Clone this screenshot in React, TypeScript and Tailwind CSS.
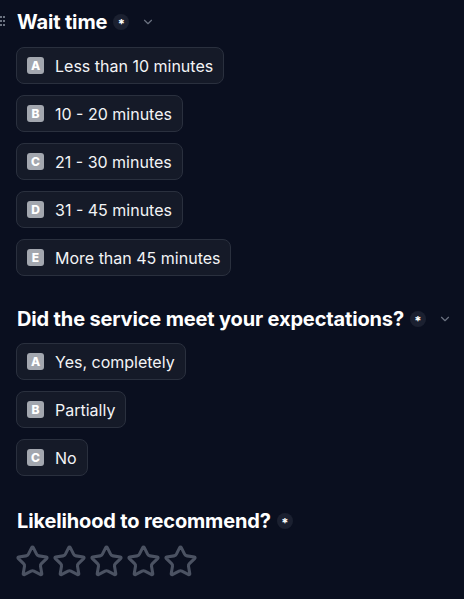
import { Star, ChevronDown } from "lucide-react";

interface Question {
  title:   string;
  options: string[];
}

const QUESTIONS: Question[] = [
  {
    title: "Wait time",
    options: ["Less than 10 minutes", "10 - 20 minutes", "21 - 30 minutes", "31 - 45 minutes", "More than 45 minutes"],
  },
  {
    title: "Did the service meet your expectations?",
    options: ["Yes, completely", "Partially", "No"],
  },
];

const LETTERS = ["A", "B", "C", "D", "E"];

function Required() {
  return (
    <span className="w-4 h-4 shrink-0 rounded-full bg-[#1b2030] flex items-center justify-center text-white text-[13px] font-bold leading-none pt-[4px]">
      *
    </span>
  );
}

function Heading({ title, chevron = true, grip = false }: { title: string; chevron?: boolean; grip?: boolean }) {
  return (
    <div className="relative flex items-center h-7 whitespace-nowrap">
      {grip && (
        <svg className="absolute -left-[17px] top-[7px]" width="6" height="12" viewBox="0 0 6 12">
          {[0, 4, 8].map((y) => (
            <g key={y} fill="#6b7280">
              <rect x="0" y={y + 1} width="2" height="2" />
              <rect x="3" y={y + 1} width="2" height="2" />
            </g>
          ))}
        </svg>
      )}
      <h2 className="shrink-0 text-[20px] font-bold text-white tracking-[-0.15px]">{title}</h2>
      <span className="ml-[6px]"><Required /></span>
      {chevron && <ChevronDown className="shrink-0 ml-[12px] w-[14px] h-[14px] text-[#6b7280]" strokeWidth={2} />}
    </div>
  );
}

function Option({ letter, label }: { letter: string; label: string }) {
  return (
    <button className="self-start h-[37px] flex items-center gap-[11px] pl-[10px] pr-[10px] rounded-lg border border-[#2a303e] bg-[#151a28] text-[16px] text-[#f3f4f6]">
      <span className="w-[17px] h-[17px] rounded-[3px] bg-[#a3a7af] flex items-center justify-center text-white text-[12px] font-extrabold">
        {letter}
      </span>
      {label}
    </button>
  );
}

export default function App() {
  return (
    <div className="min-h-screen bg-[#0a0f1f] font-['Inter',sans-serif] pl-[17px] pt-2">
      {QUESTIONS.map((q, qi) => (
        <section key={q.title} className={qi > 0 ? "mt-[29px]" : ""}>
          <Heading title={q.title} grip={qi === 0} />
          <div className={`flex flex-col gap-[11px] ${qi === 0 ? "mt-[11px]" : "mt-[10px]"} -ml-px`}>
            {q.options.map((o, i) => (
              <Option key={o} letter={LETTERS[i]} label={o} />
            ))}
          </div>
        </section>
      ))}

      <section className="mt-[31px]">
        <Heading title="Likelihood to recommend?" chevron={false} />
        <div className="flex gap-[2px] mt-[9px] -ml-[2px]">
          {[1, 2, 3, 4, 5].map((n) => (
            <Star key={n} className="w-[35px] h-[35px] text-[#4b5262]" strokeWidth={2.1} />
          ))}
        </div>
      </section>
    </div>
  );
}
